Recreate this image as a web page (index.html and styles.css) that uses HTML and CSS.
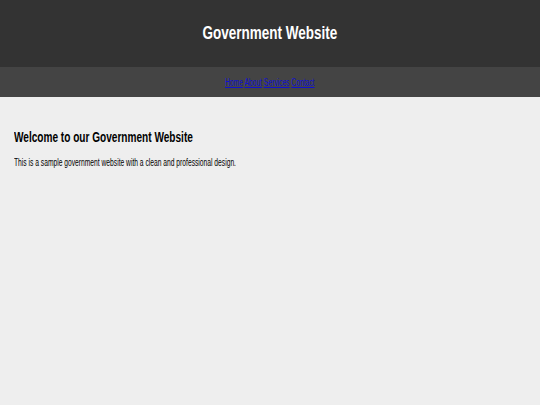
FILE: index.html
```html
<!DOCTYPE html>
<html>
<head>
<meta charset="utf-8">
<link rel="stylesheet" href="styles.css">
</head>
<body>
<header class="site-header"><h1 class="site-title">Government Website</h1></header>
<nav class="site-nav"><span class="nav-links"><a href="#">Home</a> <a href="#">About</a> <a href="#">Services</a> <a href="#">Contact</a></span></nav>
<main class="content">
<h2 class="content-title">Welcome to our Government Website</h2>
<p class="content-text">This is a sample government website with a clean and professional design.</p>
</main>
</body>
</html>
```
FILE: styles.css
```css
html, body { margin: 0; padding: 0; height: 100%; }
body {
  background: #eeeeee;
  font-family: "Liberation Sans", Arial, sans-serif;
  color: #000;
}
.site-header {
  background: #333333;
  height: 67px;
  display: flex;
  align-items: center;
  justify-content: center;
}
.site-title {
  margin: 0;
  color: #fff;
  font-size: 18px;
  font-weight: bold;
  display: inline-block;
  transform: scaleX(0.75);
  transform-origin: center;
  white-space: nowrap;
}
.site-nav {
  background: #444444;
  height: 30px;
  display: flex;
  align-items: center;
  justify-content: center;
  font-size: 10px;
}
.nav-links {
  display: inline-block;
  white-space: nowrap;
  transform: scaleX(0.67);
  transform-origin: center;
}
.nav-links a { color: #1010d0; }
.content { padding: 32px 14px; }
.content-title {
  margin: 0 0 12px;
  font-size: 14px;
  font-weight: bold;
  white-space: nowrap;
  transform: scaleX(0.72);
  transform-origin: left center;
}
.content-text {
  margin: 0;
  font-size: 10px;
  white-space: nowrap;
  transform: scaleX(0.67);
  transform-origin: left center;
}
```
